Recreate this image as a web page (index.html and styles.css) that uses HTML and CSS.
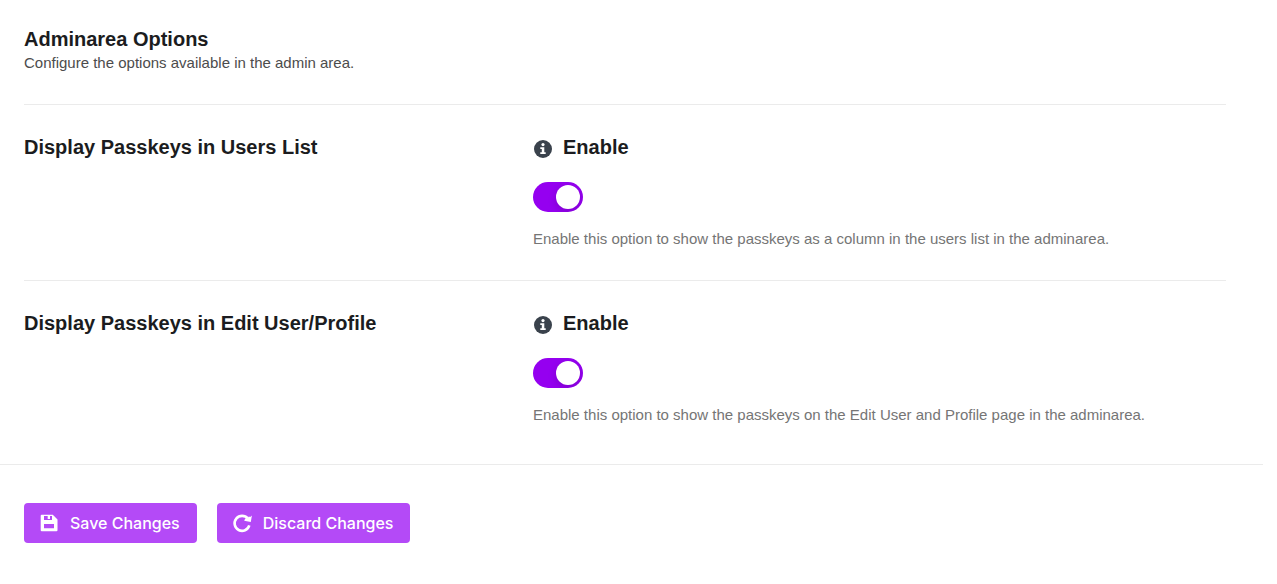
FILE: index.html
```html
<!DOCTYPE html>
<html lang="en">
<head>
<meta charset="UTF-8">
<meta name="viewport" content="width=device-width, initial-scale=1.0">
<title>Adminarea Options</title>
<link rel="stylesheet" href="styles.css">
</head>
<body>
<form class="settings">
  <div class="options">
    <header class="intro">
      <h2>Adminarea Options</h2>
      <p>Configure the options available in the admin area.</p>
    </header>

    <section class="option">
      <h3>Display Passkeys in Users List</h3>
      <div class="field">
        <label class="field-label" for="usersList">
          <svg class="info" viewBox="0 0 18 18" aria-hidden="true">
            <circle cx="9" cy="9" r="9" fill="#3a424c"/>
            <circle cx="9" cy="4.6" r="1.6" fill="#fff"/>
            <path d="M6.3 7.3h4v5h1.4v1.6H6.3v-1.6h1.5V8.9H6.3z" fill="#fff"/>
          </svg>
          Enable
        </label>
        <input class="toggle" type="checkbox" id="usersList" checked>
        <p class="help">Enable this option to show the passkeys as a column in the users list in the adminarea.</p>
      </div>
    </section>

    <section class="option">
      <h3>Display Passkeys in Edit User/Profile</h3>
      <div class="field">
        <label class="field-label" for="editProfile">
          <svg class="info" viewBox="0 0 18 18" aria-hidden="true">
            <circle cx="9" cy="9" r="9" fill="#3a424c"/>
            <circle cx="9" cy="4.6" r="1.6" fill="#fff"/>
            <path d="M6.3 7.3h4v5h1.4v1.6H6.3v-1.6h1.5V8.9H6.3z" fill="#fff"/>
          </svg>
          Enable
        </label>
        <input class="toggle" type="checkbox" id="editProfile" checked>
        <p class="help">Enable this option to show the passkeys on the Edit User and Profile page in the adminarea.</p>
      </div>
    </section>
  </div>

  <footer class="actions">
    <button type="submit">
      <svg viewBox="0 0 18 18" aria-hidden="true">
        <path fill="#fff" fill-rule="evenodd" d="M1.8 .7H12.8L17.5 5.5V16.2Q17.5 17.3 16.4 17.3H1.8Q.7 17.3 .7 16.2V1.8Q.7 .7 1.8 .7ZM4 2V6H12V2H10V5H7.7V2ZM4 10V14.3H14V10Z"/>
      </svg>
      Save Changes
    </button>
    <button type="reset">
      <svg viewBox="0 0 18 18" aria-hidden="true">
        <path fill="none" stroke="#fff" stroke-width="2.6" d="M14.9 4.6A7.5 7.5 0 1 0 16.3 11.4"/>
        <path fill="#fff" d="M18.9 1.5L17.8 8 11.2 6.8 12.2 4.6 14.8 4.2 15.8 2.4 17.2 3Z"/>
      </svg>
      Discard Changes
    </button>
  </footer>
</form>
</body>
</html>
```
FILE: styles.css
```css
* { box-sizing: border-box; }
body { margin: 0 14px 0 0; background: #fff; color: #1b1c20; font-family: "Liberation Sans", Arial, sans-serif; font-size: 15px; line-height: 24px; }
h2, h3, p { margin: 0; }
h2, h3, .field-label { font-size: 20px; font-weight: bold; line-height: 24px; }

.options { padding: 27px 37px 8px 24px; }
.intro { padding-bottom: 29px; }
.intro p { color: #4c4c4c; }

.option { display: grid; grid-template-columns: 509px 1fr; padding: 30px 0 29px; border-top: 1px solid #ebebeb; }
.field-label { display: flex; align-items: center; gap: 11px; }
.info { width: 18px; height: 18px; margin: 3px 0 0 1px; }
.help { color: #757575; }

.toggle { appearance: none; display: flex; width: 50px; height: 30px; margin: 23px 0 15px; padding: 3px; border-radius: 15px; background: #9500f0; overflow: hidden; cursor: pointer; }
.toggle::before { content: ""; width: 24px; height: 24px; border-radius: 50%; background: #fff; box-shadow: 0 3px 8px rgba(0, 0, 0, 0.15); }
.toggle:checked { justify-content: flex-end; }

.actions { display: flex; gap: 20px; padding: 38px 24px 40px; border-top: 1px solid #ebebeb; }
.actions button { display: flex; align-items: center; gap: 12px; height: 40px; padding: 0 17px 0 16px; border: 0; border-radius: 4px; background: #b44af7; color: #fff; font-family: Inter, "Liberation Sans", sans-serif; font-size: 16px; font-weight: 500; white-space: nowrap; cursor: pointer; }
.actions svg { width: 18px; height: 18px; overflow: visible; }
```
